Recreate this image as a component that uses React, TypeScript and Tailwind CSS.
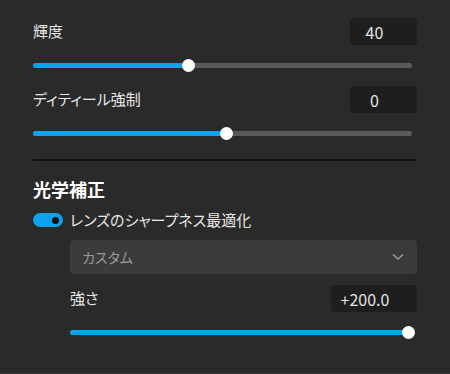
const font = {
	fontFamily: '"Noto Sans CJK JP", "Noto Sans", sans-serif',
};

const ValueBox = ({ value, width }: { value: string; width: string }) => (
	<div
		className={`h-[27px] ${width} rounded-[4px] bg-[#1e1e1e] pr-[18px] flex items-center justify-center text-[16px] text-[#e4e4e4]`}
	>
		{value}
	</div>
);

const Slider = ({ thumb }: { thumb: number }) => (
	<div className="relative h-[12px] mr-[5px]">
		<div className="absolute left-0 right-0 top-[3.5px] h-[5px] rounded-full bg-[#5a5a5a]" />
		<div
			className="absolute left-0 top-[3.5px] h-[5px] rounded-full bg-[#0aa2ec]"
			style={{ width: `${thumb}px` }}
		/>
		<div
			className="absolute -top-[0.5px] h-[13px] w-[13px] -ml-[6.5px] rounded-full bg-white"
			style={{ left: `${thumb}px` }}
		/>
	</div>
);

export default function App() {
	return (
		<div
			className="w-[450px] h-[374px] bg-[#2a2a2a] border-b border-[#3a3a3a] pt-[18px] pl-[33px] pr-[33px] text-[#e6e6e6] [font-feature-settings:'palt']"
			style={font}
		>
			<div className="flex items-center justify-between h-[27px]">
				<span className="text-[15px]">輝度</span>
				<ValueBox value="40" width="w-[67px]" />
			</div>
			<div className="mt-[14px]">
				<Slider thumb={155} />
			</div>

			<div className="mt-[15px] flex items-center justify-between h-[27px]">
				<span className="text-[15px]">ディティール強制</span>
				<ValueBox value="0" width="w-[67px]" />
			</div>
			<div className="mt-[14px]">
				<Slider thumb={193} />
			</div>

			<div className="mt-[20px] h-[2px] bg-[#121212]" />

			<h2 className="mt-[16px] h-[24px] leading-[24px] text-[18px] font-bold text-white">光学補正</h2>

			<div className="mt-[9px] h-[20px] flex items-center gap-[7px]">
				<div className="relative w-[30px] h-[14px] rounded-full bg-[#0aa2ec]">
					<div className="absolute right-[4px] top-[3.5px] w-[7px] h-[7px] rounded-full bg-[#111]" />
				</div>
				<span className="text-[15px]">レンズのシャープネス最適化</span>
			</div>

			<div className="ml-[37px]">
				<div className="mt-[10px] h-[34px] rounded-[4px] bg-[#3b3b3b] flex items-center justify-between pl-[12px] pr-[13px]">
					<span className="text-[14px] text-[#9a9a9a]">カスタム</span>
					<svg width="12" height="8" viewBox="0 0 12 8" fill="none">
						<polyline points="1,1.5 6,6 11,1.5" stroke="#9a9a9a" strokeWidth="1.6" />
					</svg>
				</div>

				<div className="mt-[11px] flex items-center justify-between h-[27px]">
					<span className="text-[15px]">強さ</span>
					<ValueBox value="+200.0" width="w-[86px]" />
				</div>
				<div className="mt-[14px]">
					<Slider thumb={338} />
				</div>
			</div>
		</div>
	);
}
